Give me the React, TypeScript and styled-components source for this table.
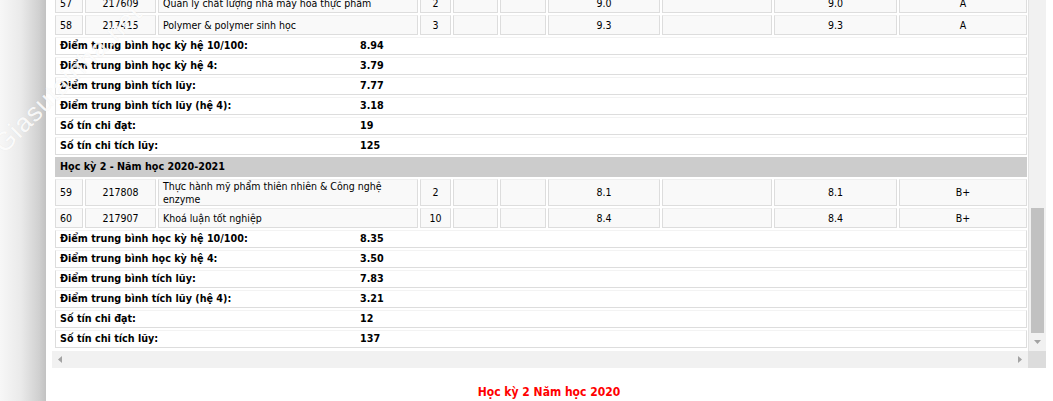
import React from "react";
import styled, { createGlobalStyle } from "styled-components";

const GlobalStyle = createGlobalStyle`
  html, body { margin: 0; padding: 0; background: #fff; }
  body {
    font-family: "DejaVu Sans Condensed", "DejaVu Sans", "Liberation Sans", sans-serif;
    font-stretch: condensed;
    font-size: 10.5px;
    color: #000;
    overflow: hidden;
  }
`;

const Screen = styled.div`
  position: relative;
  width: 1053px;
  height: 401px;
  overflow: hidden;
  display: flex;
  background: #fff;
`;

const Shadow = styled.div`
  width: 46px;
  flex: none;
  background: linear-gradient(to right, #f7f7f7 0%, #eaeaea 45%, #d0d0d0 85%, #c2c2c2 100%);
`;

const Page = styled.main`
  flex: 1;
  display: flex;
  flex-direction: column;
  padding: 0 7px 0 6px;
  background: #fff;
`;

const ScrollFrame = styled.div`
  display: grid;
  grid-template-columns: 976px 18px;
  grid-template-rows: 351px 17px;
`;

const Viewport = styled.div`
  overflow: hidden;
  padding-left: 1px;
`;

const Grid = styled.table`
  table-layout: fixed;
  width: 976px;
  border-collapse: separate;
  border-spacing: 2px;
  margin-top: -9px;
`;

const Col = styled.col<{ $w: number }>`
  width: ${(p) => p.$w}px;
`;

const Cell = styled.td<{ $left?: boolean }>`
  box-sizing: border-box;
  height: 20px;
  padding: 0 4px;
  background: #f9f9f9;
  border: 1px solid #dddddd;
  border-top-color: #eeeeee;
  text-align: ${(p) => (p.$left ? "left" : "center")};
  vertical-align: middle;
  line-height: 12.5px;
  overflow: hidden;
`;

const SumCell = styled.td`
  box-sizing: border-box;
  height: 18px;
  padding: 0 4px;
  background: #fff;
  border: 1px solid #dddddd;
  border-top-color: #f3f3f3;
  font-size: 10.7px;
  font-weight: bold;
  vertical-align: middle;
  line-height: 12.5px;
`;

const SumInner = styled.div`
  display: grid;
  grid-template-columns: 300px 1fr;
`;

const HeadCell = styled.td`
  box-sizing: border-box;
  height: 20px;
  padding: 0 5px;
  background: #cccccc;
  font-size: 10.7px;
  font-weight: bold;
  vertical-align: middle;
  line-height: 12.5px;
`;

const VBar = styled.div`
  display: grid;
  grid-template-rows: 208px 125px 1fr;
  background: #f1f1f1;
  border-left: 1px solid #e2e2e2;
`;

const Thumb = styled.div`
  grid-row: 2;
  margin: 0 2px;
  background: #c1c1c1;
`;

const ArrowBox = styled.div`
  grid-row: 3;
  display: flex;
  align-items: center;
  justify-content: center;
`;

const HBar = styled.div`
  display: flex;
  align-items: center;
  justify-content: space-between;
  padding: 0 6px;
  background: #f1f1f1;
`;

const Corner = styled.div`
  background: #dcdcdc;
`;

const Title = styled.h3`
  margin: 17px 0 0;
  text-align: center;
  color: #ff0000;
  font-size: 12px;
  font-weight: bold;
  line-height: 14px;
`;

const Watermark = styled.div`
  position: absolute;
  left: 7px;
  top: 131px;
  font-family: "Liberation Sans", "DejaVu Sans", sans-serif;
  font-size: 26px;
  line-height: 26px;
  letter-spacing: 1px;
  color: rgba(255, 255, 255, 0.9);
  text-shadow: 0 0 1px rgba(0, 0, 0, 0.08);
  transform: rotate(-45deg);
  transform-origin: 0 100%;
  white-space: nowrap;
  pointer-events: none;
`;

const widths = [28, 71, 260, 31, 45, 46, 112, 110, 123, 128];

type Course = {
  stt: number;
  code: string;
  name: string;
  tc: number;
  d1: string;
  d2: string;
  grade: string;
};

const labels = [
  "Điểm trung bình học kỳ hệ 10/100:",
  "Điểm trung bình học kỳ hệ 4:",
  "Điểm trung bình tích lũy:",
  "Điểm trung bình tích lũy (hệ 4):",
  "Số tín chi đạt:",
  "Số tín chi tích lũy:",
];

const sem1: Course[] = [
  { stt: 57, code: "217609", name: "Quản lý chất lượng nhà máy hóa thực phẩm", tc: 2, d1: "9.0", d2: "9.0", grade: "A" },
  { stt: 58, code: "217415", name: "Polymer & polymer sinh học", tc: 3, d1: "9.3", d2: "9.3", grade: "A" },
];
const sum1 = ["8.94", "3.79", "7.77", "3.18", "19", "125"];

const sem2: Course[] = [
  { stt: 59, code: "217808", name: "Thực hành mỹ phẩm thiên nhiên & Công nghệ enzyme", tc: 2, d1: "8.1", d2: "8.1", grade: "B+" },
  { stt: 60, code: "217907", name: "Khoá luận tốt nghiệp", tc: 10, d1: "8.4", d2: "8.4", grade: "B+" },
];
const sum2 = ["8.35", "3.50", "7.83", "3.21", "12", "137"];

const CourseRow = ({ c }: { c: Course }) => (
  <tr>
    <Cell $left>{c.stt}</Cell>
    <Cell>{c.code}</Cell>
    <Cell $left>{c.name}</Cell>
    <Cell>{c.tc}</Cell>
    <Cell />
    <Cell />
    <Cell>{c.d1}</Cell>
    <Cell />
    <Cell>{c.d2}</Cell>
    <Cell>{c.grade}</Cell>
  </tr>
);

const Summary = ({ values }: { values: string[] }) => (
  <>
    {labels.map((l, i) => (
      <tr key={l}>
        <SumCell colSpan={10}>
          <SumInner>
            <span>{l}</span>
            <span>{values[i]}</span>
          </SumInner>
        </SumCell>
      </tr>
    ))}
  </>
);

export default function App() {
  return (
    <>
      <GlobalStyle />
      <Screen>
        <Shadow />
        <Page>
          <ScrollFrame>
            <Viewport>
              <Grid>
                <colgroup>
                  {widths.map((w, i) => (
                    <Col key={i} $w={w} />
                  ))}
                </colgroup>
                <tbody>
                  {sem1.map((c) => (
                    <CourseRow key={c.stt} c={c} />
                  ))}
                  <Summary values={sum1} />
                  <tr>
                    <HeadCell colSpan={10}>Học kỳ 2 - Năm học 2020-2021</HeadCell>
                  </tr>
                  {sem2.map((c) => (
                    <CourseRow key={c.stt} c={c} />
                  ))}
                  <Summary values={sum2} />
                </tbody>
              </Grid>
            </Viewport>
            <VBar>
              <Thumb />
              <ArrowBox>
                <svg width="7" height="4" viewBox="0 0 7 4">
                  <polygon points="0,0 7,0 3.5,4" fill="#a3a3a3" />
                </svg>
              </ArrowBox>
            </VBar>
            <HBar>
              <svg width="4" height="7" viewBox="0 0 4 7">
                <polygon points="4,0 4,7 0,3.5" fill="#a3a3a3" />
              </svg>
              <svg width="4" height="7" viewBox="0 0 4 7">
                <polygon points="0,0 4,3.5 0,7" fill="#a3a3a3" />
              </svg>
            </HBar>
            <Corner />
          </ScrollFrame>
          <Title>Học kỳ 2 Năm học 2020</Title>
        </Page>
        <Watermark>Giasutainha.net</Watermark>
      </Screen>
    </>
  );
}
